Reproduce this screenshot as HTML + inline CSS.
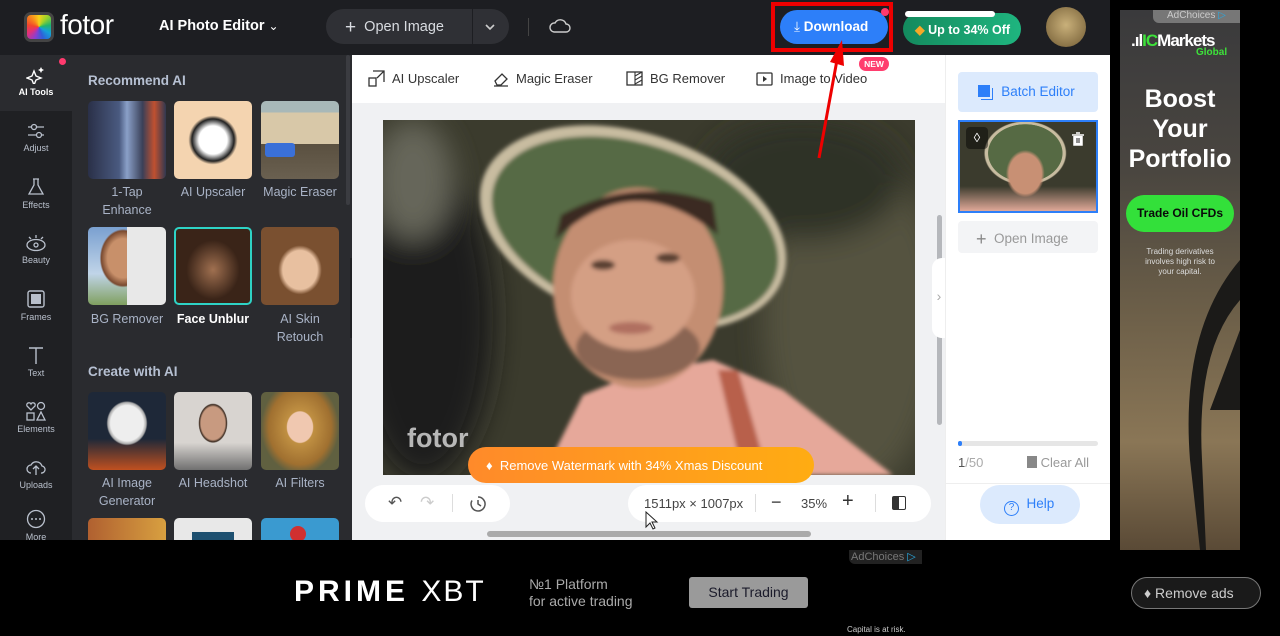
<!DOCTYPE html>
<html><head><meta charset="utf-8"><style>
*{box-sizing:border-box;margin:0;padding:0}
body{width:1280px;height:636px;overflow:hidden;background:#000;font-family:"Liberation Sans",sans-serif;position:relative}
.abs{position:absolute}
.hdr{left:0;top:0;width:1110px;height:55px;background:#1d1e22}
.rail{left:0;top:55px;width:72px;height:485px;background:#1f2023}
.panel{left:72px;top:55px;width:280px;height:485px;background:#2a2b2f}
.ri{position:absolute;left:0;width:72px;text-align:center;color:#b9c0cc;font-size:9px}
.ri svg{display:block;margin:0 auto 3px}
.th{position:absolute;width:78px;height:78px;border-radius:5px;overflow:hidden}
.lb{position:absolute;width:86px;text-align:center;color:#a9b3c6;font-size:12.5px;line-height:18px}
.h2{position:absolute;left:88px;color:#b6c0d2;font-size:13.5px;font-weight:bold}
.tb{position:absolute;top:70px;font-size:13px;color:#333;display:flex;align-items:center;gap:7px}
</style></head><body>
<div class="abs hdr"></div>
<div class="abs" style="left:24px;top:12px;width:30px;height:30px;border-radius:7px;background:#444;padding:3px">
<div style="width:24px;height:24px;border-radius:4px;background:conic-gradient(#f7d21a,#9bd22b,#1fb56f,#15a0d9,#2f5fd8,#8a3fd1,#e3307a,#f2452d,#f7861c,#f7d21a)"></div></div>
<div class="abs" style="left:60px;top:9px;color:#fff;font-size:28px;letter-spacing:-0.5px">fotor</div>
<div class="abs" style="left:159px;top:18px;color:#fff;font-size:14.5px;font-weight:bold">AI Photo Editor <span style="font-weight:normal;font-size:12px">&#8964;</span></div>
<div class="abs" style="left:326px;top:9px;width:183px;height:35px;border-radius:18px;background:#2f3035"></div>
<div class="abs" style="left:472px;top:9px;width:1px;height:35px;background:#1d1e22"></div>
<div class="abs" style="left:345px;top:17px;color:#d8dbe0;font-size:14.5px"><span style="font-size:19px;vertical-align:-2px">+</span>&nbsp; Open Image</div>
<svg class="abs" style="left:484px;top:22px" width="12" height="10"><path d="M2 3l4 4 4-4" stroke="#ccc" stroke-width="1.6" fill="none"/></svg>
<div class="abs" style="left:528px;top:18px;width:1px;height:18px;background:#444"></div>
<svg class="abs" style="left:549px;top:17px" width="22" height="18"><path d="M5 15h12a4 4 0 0 0 0-8 6 6 0 0 0-11-1 4.5 4.5 0 0 0-1 9z" stroke="#ccc" stroke-width="1.4" fill="none"/></svg>
<div class="abs" style="left:771px;top:2px;width:122px;height:50px;border:4px solid #e00"></div>
<div class="abs" style="left:780px;top:10px;width:108px;height:34px;border-radius:17px;background:#2d7ff9;color:#fff;font-size:13.5px;font-weight:bold;padding:9px 0 0 14px"><span style="font-weight:normal">&#10515;</span> Download</div>
<div class="abs" style="left:881px;top:8px;width:8px;height:8px;border-radius:50%;background:#ff3a6e"></div>
<div class="abs" style="left:903px;top:13px;width:118px;height:32px;border-radius:16px;background:linear-gradient(90deg,#148a5e,#1fb57f);color:#fff;font-size:12.5px;font-weight:bold;padding:9px 0 0 12px;white-space:nowrap"><span style="color:#f7a928">&#9670;</span> Up to 34% Off</div>
<div class="abs" style="left:905px;top:11px;width:90px;height:6px;border-radius:4px;background:#fff"></div>
<div class="abs" style="left:1046px;top:7px;width:40px;height:40px;border-radius:50%;background:radial-gradient(circle at 50% 45%,#c9b07a,#8b7448 70%,#5a4a30)"></div>
<div class="abs rail"></div>
<div class="abs" style="left:0;top:55px;width:72px;height:56px;background:#2a2b2f"></div>
<div class="abs" style="left:59px;top:58px;width:7px;height:7px;border-radius:50%;background:#ff3a6e"></div>
<div class="ri" style="top:66px;color:#fff;font-weight:bold"><svg width="20" height="18"><path d="M8 5l2 5 5 2-5 2-2 5-2-5-5-2 5-2z" stroke="#fff" stroke-width="1.4" fill="none"/><path d="M15 1l1 2 2 1-2 1-1 2-1-2-2-1 2-1z" fill="#fff"/></svg>AI Tools</div>
<div class="ri" style="top:122px"><svg width="20" height="18"><path d="M2 5h16M2 13h16" stroke="#b9c0cc" stroke-width="1.3"/><circle cx="8" cy="5" r="2.5" fill="#1f2023" stroke="#b9c0cc" stroke-width="1.3"/><circle cx="13" cy="13" r="2.5" fill="#1f2023" stroke="#b9c0cc" stroke-width="1.3"/></svg>Adjust</div>
<div class="ri" style="top:177px"><svg width="20" height="20"><path d="M7 2h6M8 2v6l-5 9h14l-5-9V2" stroke="#b9c0cc" stroke-width="1.3" fill="none"/></svg>Effects</div>
<div class="ri" style="top:234px"><svg width="22" height="18"><ellipse cx="11" cy="11" rx="9" ry="5.5" stroke="#b9c0cc" stroke-width="1.3" fill="none"/><circle cx="11" cy="11" r="2" stroke="#b9c0cc" stroke-width="1.3" fill="none"/><path d="M11 1v3M4 3l2 2M18 3l-2 2" stroke="#b9c0cc" stroke-width="1.3"/></svg>Beauty</div>
<div class="ri" style="top:289px"><svg width="20" height="20"><rect x="2" y="2" width="16" height="16" rx="2" stroke="#b9c0cc" stroke-width="1.4" fill="none"/><rect x="5" y="5" width="10" height="10" fill="#b9c0cc"/></svg>Frames</div>
<div class="ri" style="top:345px"><svg width="20" height="20"><path d="M3 3h14M10 3v16" stroke="#b9c0cc" stroke-width="1.4"/></svg>Text</div>
<div class="ri" style="top:401px"><svg width="22" height="20"><circle cx="16" cy="5" r="3.5" stroke="#b9c0cc" stroke-width="1.3" fill="none"/><path d="M6 9L2 5a2 2 0 0 1 4-2 2 2 0 0 1 4 2z" stroke="#b9c0cc" stroke-width="1.3" fill="none"/><rect x="2" y="12" width="7" height="7" stroke="#b9c0cc" stroke-width="1.3" fill="none"/><path d="M16 11l4 8h-8z" stroke="#b9c0cc" stroke-width="1.3" fill="none"/></svg>Elements</div>
<div class="ri" style="top:457px"><svg width="22" height="20"><path d="M6 16a4 4 0 0 1 0-8 6 6 0 0 1 11 1 3.5 3.5 0 0 1-1 7M11 18V9M8 12l3-3 3 3" stroke="#b9c0cc" stroke-width="1.3" fill="none"/></svg>Uploads</div>
<div class="ri" style="top:509px"><svg width="22" height="20"><circle cx="11" cy="10" r="8.5" stroke="#b9c0cc" stroke-width="1.3" fill="none"/><circle cx="7" cy="10" r="1" fill="#b9c0cc"/><circle cx="11" cy="10" r="1" fill="#b9c0cc"/><circle cx="15" cy="10" r="1" fill="#b9c0cc"/></svg>More</div>
<div class="abs panel"></div>
<div class="abs" style="left:346px;top:55px;width:4px;height:150px;border-radius:2px;background:#3b3c41"></div>
<div class="h2" style="top:73px">Recommend AI</div>
<div class="th" style="left:88px;top:101px;background:linear-gradient(90deg,#2a3048,#4a5a80 40%,#8aa0c8 50%,#3a4058 70%,#c05030 85%,#303850)"></div>
<div class="th" style="left:174px;top:101px;background:radial-gradient(ellipse 45% 45% at 50% 50%,#fff 0 40%,#222 60%,transparent 70%),#f4d4b0"></div>
<div class="th" style="left:261px;top:101px;background:linear-gradient(180deg,#a8b8b8 0 15%,#d8c8a8 15% 55%,#5a5040 55%,#6a6050);"><div style="position:absolute;left:4px;top:42px;width:30px;height:14px;background:#3a70d8;border-radius:3px"></div></div>
<div class="lb" style="left:84px;top:183px">1-Tap<br>Enhance</div>
<div class="lb" style="left:170px;top:183px">AI Upscaler</div>
<div class="lb" style="left:257px;top:183px;width:86px">Magic Eraser</div>
<div class="th" style="left:88px;top:227px;background:linear-gradient(90deg,transparent 50%,#e8e8e8 50%),radial-gradient(ellipse 40% 50% at 45% 40%,#c8906a 0 50%,#7a4a30 70%,transparent 75%),linear-gradient(#7aa0d0,#c0d4e8 60%,#80a060)"></div>
<div class="th" style="left:174px;top:227px;border:2px solid #2ed3c6;background:radial-gradient(ellipse 45% 50% at 50% 55%,#a07050,#3a2418 80%)"></div>
<div class="th" style="left:261px;top:227px;background:radial-gradient(ellipse 40% 45% at 50% 55%,#e8c0a0 0 55%,#7a5030 70%),#ddd"></div>
<div class="lb" style="left:84px;top:310px">BG Remover</div>
<div class="lb" style="left:170px;top:310px;color:#fff;font-weight:bold">Face Unblur</div>
<div class="lb" style="left:257px;top:310px">AI Skin<br>Retouch</div>
<div class="h2" style="top:364px">Create with AI</div>
<div class="th" style="left:88px;top:392px;background:radial-gradient(ellipse 35% 38% at 50% 40%,#eee 0 60%,#aaa 70%,transparent 75%),linear-gradient(#1e2838 60%,#c05020)"></div>
<div class="th" style="left:174px;top:392px;background:radial-gradient(ellipse 22% 30% at 50% 40%,#c89a80 0 70%,#3a2a20 80%,transparent 85%),linear-gradient(#d8d4d0 65%,#707070)"></div>
<div class="th" style="left:261px;top:392px;background:radial-gradient(ellipse 25% 30% at 50% 45%,#f0c8b0 0 65%,transparent 70%),radial-gradient(ellipse 50% 60% at 50% 45%,#d8a850,#a07030 80%,#606040)"></div>
<div class="lb" style="left:84px;top:474px">AI Image<br>Generator</div>
<div class="lb" style="left:170px;top:474px">AI Headshot</div>
<div class="lb" style="left:257px;top:474px">AI Filters</div>
<div class="th" style="left:88px;top:518px;height:22px;border-radius:5px 5px 0 0;background:linear-gradient(90deg,#b06030,#d8a040)"></div>
<div class="th" style="left:174px;top:518px;height:22px;border-radius:5px 5px 0 0;background:#e8e8e8"><div style="position:absolute;left:18px;top:14px;width:42px;height:8px;background:#1e5070"></div></div>
<div class="th" style="left:261px;top:518px;height:22px;border-radius:5px 5px 0 0;background:#3a9ad0"><div style="position:absolute;left:29px;top:8px;width:16px;height:16px;border-radius:50%;background:#d03030"></div></div>
<div class="abs" style="left:350px;top:258px;width:16px;height:80px;border-radius:0 10px 10px 0;background:#1f2023;color:#aaa;font-size:14px;padding-top:30px;text-align:center">&#8249;</div>
<div class="abs" style="left:352px;top:55px;width:593px;height:485px;background:#f0f1f3"></div>
<div class="abs" style="left:352px;top:55px;width:593px;height:48px;background:#fff"></div>
<div class="tb" style="left:368px"><svg width="17" height="17"><rect x="1" y="8" width="7" height="8" stroke="#333" stroke-width="1.3" fill="none"/><path d="M5 1h11v11M16 1l-7 7M11 1h5v5" stroke="#333" stroke-width="1.3" fill="none"/></svg>AI Upscaler</div>
<div class="tb" style="left:492px"><svg width="17" height="17"><path d="M3 11l7-7 5 5-6 6H5z M2 16h14" stroke="#333" stroke-width="1.3" fill="none"/></svg>Magic Eraser</div>
<div class="tb" style="left:626px"><svg width="17" height="17"><rect x="1" y="2" width="15" height="13" stroke="#333" stroke-width="1.3" fill="none"/><path d="M9 2v13M9 6l7-4M9 10l7-4M9 14l7-4" stroke="#333" stroke-width="1.1"/></svg>BG Remover</div>
<div class="tb" style="left:756px"><svg width="17" height="17"><rect x="1" y="3" width="15" height="12" rx="1" stroke="#333" stroke-width="1.3" fill="none"/><path d="M7 6l4 3-4 3z" fill="#333"/></svg>Image to Video</div>
<div class="abs" style="left:859px;top:57px;width:30px;height:14px;border-radius:7px;background:#ff3d6e;color:#fff;font-size:8.5px;font-weight:bold;text-align:center;line-height:14px">NEW</div>
<svg class="abs" style="left:383px;top:120px" width="532" height="355" viewBox="0 0 532 355">
<defs><filter id="b1"><feGaussianBlur stdDeviation="14"/></filter><filter id="b2"><feGaussianBlur stdDeviation="2"/></filter></defs>
<rect width="532" height="355" fill="#3b3b2d"/>
<g filter="url(#b1)">
<ellipse cx="40" cy="200" rx="70" ry="160" fill="#1e1e1a"/>
<ellipse cx="470" cy="200" rx="90" ry="170" fill="#55533f"/>
<ellipse cx="30" cy="60" rx="40" ry="60" fill="#66665a"/>
<ellipse cx="420" cy="60" rx="100" ry="60" fill="#2e3026"/>
</g>
<g filter="url(#b2)">
<path d="M160 355 L200 275 L250 255 L330 240 L400 270 L510 355Z" fill="#e6a89a"/>
<path d="M335 250 L360 355 L385 355 L355 250Z" fill="#b8604c"/>
<ellipse cx="250" cy="108" rx="158" ry="95" transform="rotate(18 250 108)" fill="#c8bca0"/>
<ellipse cx="252" cy="110" rx="148" ry="86" transform="rotate(18 252 110)" fill="#566a44"/>
<ellipse cx="255" cy="168" rx="85" ry="100" fill="#c48e72"/>
<ellipse cx="255" cy="228" rx="62" ry="32" fill="#8a6552"/>
<ellipse cx="250" cy="175" rx="62" ry="55" fill="#d49f84"/>
<path d="M172 120 Q250 45 335 115 L330 82 Q250 55 178 95Z" fill="#3a2a22"/>
<ellipse cx="220" cy="145" rx="12" ry="5" fill="#5a4030"/>
<ellipse cx="285" cy="138" rx="12" ry="5" fill="#5a4030"/>
<ellipse cx="248" cy="208" rx="22" ry="6" fill="#b07060"/>
</g>
<text x="24" y="327" font-family="Liberation Sans" font-weight="bold" font-size="27" fill="#ddd" fill-opacity="0.8">fotor</text>
</svg>
<div class="abs" style="left:468px;top:447px;width:346px;height:36px;border-radius:18px;background:linear-gradient(90deg,#ff8a2a,#ffac12);color:#fff;font-size:13px;padding:11px 0 0 18px"><span>&#9830;</span>&nbsp; Remove Watermark with 34% Xmas Discount</div>
<div class="abs" style="left:937px;top:215px;width:5px;height:210px;border-radius:3px;background:#b5b7bb"></div>
<div class="abs" style="left:365px;top:485px;width:145px;height:37px;border-radius:19px;background:#fff"></div>
<div class="abs" style="left:388px;top:493px;font-size:17px;color:#555">&#8630;</div>
<div class="abs" style="left:420px;top:493px;font-size:17px;color:#ccc">&#8631;</div>
<div class="abs" style="left:452px;top:494px;width:1px;height:18px;background:#ddd"></div>
<svg class="abs" style="left:469px;top:495px" width="18" height="18"><path d="M9 2a7 7 0 1 1-6 3.5M9 5v4l3 2" stroke="#555" stroke-width="1.5" fill="none"/></svg>
<div class="abs" style="left:628px;top:485px;width:303px;height:37px;border-radius:19px;background:#fff"></div>
<div class="abs" style="left:644px;top:496px;font-size:13px;color:#444">1511px × 1007px</div>
<div class="abs" style="left:755px;top:494px;width:1px;height:18px;background:#ddd"></div>
<div class="abs" style="left:771px;top:492px;font-size:18px;color:#333">&minus;</div>
<div class="abs" style="left:801px;top:496px;font-size:13px;color:#444">35%</div>
<div class="abs" style="left:842px;top:490px;font-size:20px;color:#333">+</div>
<div class="abs" style="left:875px;top:494px;width:1px;height:18px;background:#ddd"></div>
<div class="abs" style="left:892px;top:496px;width:14px;height:14px;border:1.6px solid #333;border-radius:2px;background:linear-gradient(90deg,#333 50%,#fff 50%)"></div>
<div class="abs" style="left:487px;top:531px;width:324px;height:6px;border-radius:3px;background:#aaa"></div>
<svg class="abs" style="left:645px;top:511px" width="14" height="20"><path d="M1 1v15l4-4 3 6 2-1-3-6h5z" fill="#fff" stroke="#222" stroke-width="1"/></svg>
<svg class="abs" style="left:810px;top:40px" width="40" height="125"><path d="M9 118 L27 20" stroke="#e00" stroke-width="3"/><path d="M20 22 L32 0 L34 26Z" fill="#e00"/></svg>
<div class="abs" style="left:932px;top:258px;width:14px;height:80px;border-radius:10px 0 0 10px;background:#fff;color:#aaa;font-size:14px;padding-top:30px;text-align:center">&#8250;</div>
<div class="abs" style="left:945px;top:55px;width:165px;height:485px;background:#fff;border-left:1px solid #eee"></div>
<div class="abs" style="left:958px;top:72px;width:140px;height:40px;border-radius:4px;background:#dceafd;color:#2d7ff9;font-size:13.5px;padding:12px 0 0 20px"><span style="display:inline-block;width:12px;height:12px;background:#2d7ff9;box-shadow:2px 2px 0 #dceafd,3px 3px 0 #2d7ff9;vertical-align:-1px"></span>&nbsp;&nbsp; Batch Editor</div>
<div class="abs" style="left:958px;top:120px;width:140px;height:93px;border:2px solid #2d7ff9;background:radial-gradient(ellipse 15% 28% at 48% 58%,#c89074 0 80%,transparent 95%),radial-gradient(ellipse 32% 38% at 48% 35%,#566a44 0 85%,#c8bca0 86% 92%,transparent 95%),linear-gradient(180deg,#3b3b2d 72%,#e0a898)"></div>
<div class="abs" style="left:966px;top:127px;width:22px;height:22px;border-radius:4px;background:rgba(0,0,0,.45);color:#fff;font-size:13px;text-align:center;line-height:22px">&#9674;</div>
<svg class="abs" style="left:1071px;top:132px" width="14" height="14"><path d="M1 3h12M5 1h4M3 4v9h8V4" stroke="#fff" stroke-width="1.5" fill="#fff"/><path d="M6 6v5M8 6v5" stroke="#222" stroke-width="1"/></svg>
<div class="abs" style="left:958px;top:221px;width:140px;height:32px;border-radius:4px;background:#f3f4f6;color:#999;font-size:13.5px;padding:8px 0 0 18px"><span style="font-size:18px;vertical-align:-2px;color:#888">+</span>&nbsp; Open Image</div>
<div class="abs" style="left:958px;top:441px;width:140px;height:5px;border-radius:3px;background:#e6e6e6"><div style="width:4px;height:5px;border-radius:3px;background:#2d7ff9"></div></div>
<div class="abs" style="left:958px;top:455px;font-size:13px;color:#555">1<span style="color:#aaa">/50</span></div>
<div class="abs" style="left:1027px;top:455px;font-size:13px;color:#999"><span style="display:inline-block;width:10px;height:12px;background:#888;vertical-align:-1px"></span> Clear All</div>
<div class="abs" style="left:946px;top:483px;width:164px;height:1px;background:#eee"></div>
<div class="abs" style="left:980px;top:485px;width:100px;height:39px;border-radius:20px;background:#dceafd;color:#2d7ff9;font-size:13.5px;padding:11px 0 0 24px"><span style="display:inline-block;width:15px;height:15px;border:1.5px solid #2d7ff9;border-radius:50%;font-size:10px;text-align:center;line-height:12px;vertical-align:-2px">?</span>&nbsp; Help</div>
<div class="abs" style="left:1120px;top:10px;width:120px;height:540px;background:linear-gradient(180deg,#3a3a3c 0%,#4a4640 30%,#6b5e48 55%,#8a7656 80%,#5a4a36 100%)"></div>
<svg class="abs" style="left:1150px;top:130px" width="90" height="420"><path d="M90 130 Q30 200 40 330 L50 420 L56 420 L52 330 Q46 220 90 170Z" fill="#1b1a18"/><path d="M90 280 L60 280 L90 200Z" fill="#1b1a18"/></svg>
<div class="abs" style="left:1153px;top:10px;width:87px;height:13px;background:#777;border-radius:0 0 0 6px;color:#ccc;font-size:10px;padding-left:14px">AdChoices <span style="color:#29a9e0">&#9655;</span></div>
<div class="abs" style="left:1131px;top:31px;color:#fff;font-size:17px;font-weight:bold;letter-spacing:-1px;white-space:nowrap">.ıl<span style="color:#3de23a">IC</span>Markets</div>
<div class="abs" style="left:1196px;top:47px;color:#3de23a;font-size:10px;font-weight:bold">Global</div>
<div class="abs" style="left:1120px;top:84px;width:120px;text-align:center;color:#fff;font-size:25px;font-weight:bold;line-height:30px">Boost<br>Your<br>Portfolio</div>
<div class="abs" style="left:1126px;top:195px;width:108px;height:37px;border-radius:19px;background:#33e03a;color:#0a0a0a;font-size:12px;font-weight:bold;text-align:center;line-height:37px">Trade Oil CFDs</div>
<div class="abs" style="left:1120px;top:247px;width:120px;text-align:center;color:#ddd;font-size:8px;line-height:10px">Trading derivatives<br>involves high risk to<br>your capital.</div>
<div class="abs" style="left:195px;top:550px;width:727px;height:86px;background:#000"></div>
<div class="abs" style="left:849px;top:550px;width:73px;height:14px;background:#222;border-radius:0 0 0 6px;color:#777;font-size:11px;padding-left:2px">AdChoices <span style="color:#29a9e0">&#9655;</span></div>
<div class="abs" style="left:294px;top:575px;color:#fff;font-size:30px;font-weight:bold;letter-spacing:4px">PRIME <span style="font-weight:normal;letter-spacing:2px">XBT</span></div>
<div class="abs" style="left:529px;top:576px;color:#aaa;font-size:14px;line-height:17px">№1 Platform<br>for active trading</div>
<div class="abs" style="left:689px;top:577px;width:119px;height:31px;border-radius:3px;background:#9a9a9a;color:#1a1a2a;font-size:14px;text-align:center;line-height:31px">Start Trading</div>
<div class="abs" style="left:847px;top:625px;color:#ccc;font-size:8px">Capital is at risk.</div>
<div class="abs" style="left:1131px;top:577px;width:130px;height:32px;border-radius:16px;border:1px solid #777;background:#1a1a1a;color:#ccc;font-size:14px;padding:7px 0 0 12px"><span>&#9830;</span> Remove ads</div>
</body></html>
